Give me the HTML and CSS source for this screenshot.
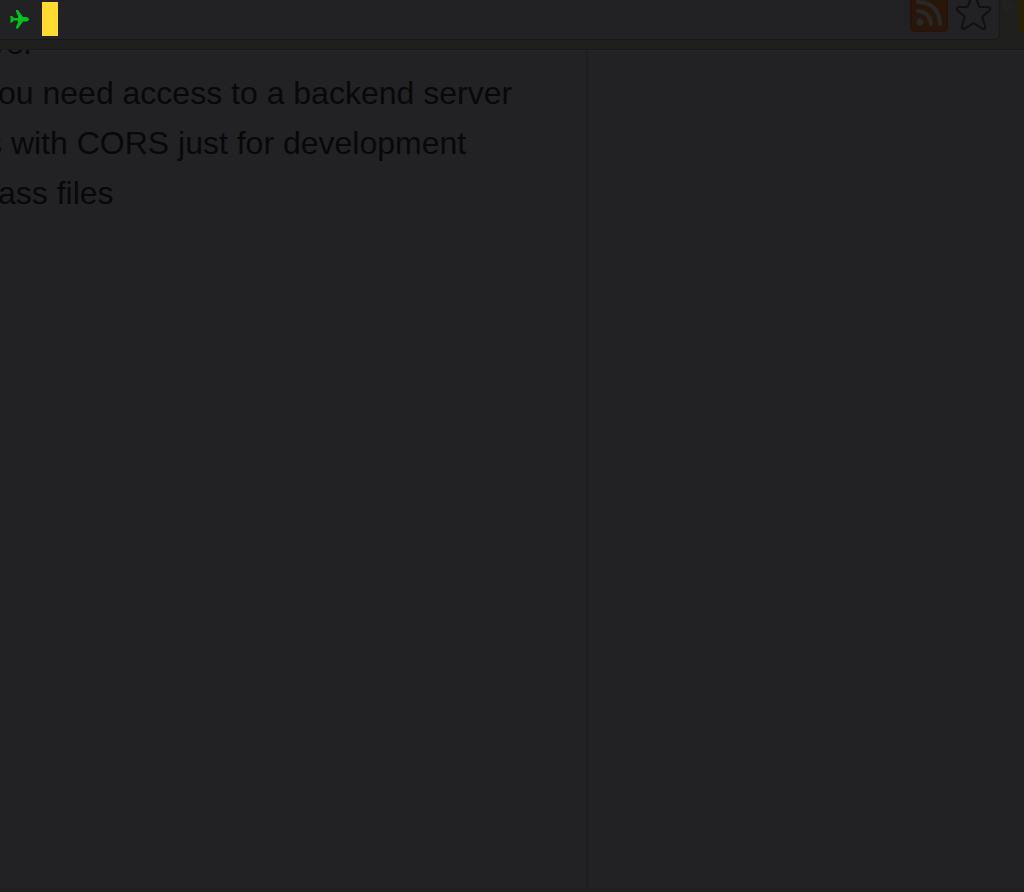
FILE: index.html
```html
<!DOCTYPE html>
<html lang="en">
<head>
<meta charset="utf-8">
<title>Terminal</title>
<link rel="stylesheet" href="styles.css">
</head>
<body>
<header class="toolbar">
  <div class="address">
    <div class="prompt">
      <svg class="plane" width="20" height="20" viewBox="0 0 20 20" aria-hidden="true"><path d="M0 6h2l2 2h4V6L7 4 6 1V0h2l5 7h4q2 1 2 2.500q0 1.500-2 2h-4l-5 7H6v-1l1-3 1-2v-2H4l-2 2H0l1-3H0V9h1z"/></svg>
      <span class="cursor"></span>
    </div>
    <div class="actions">
      <button class="icon-button" type="button" aria-label="RSS feed">
        <svg width="38" height="32" viewBox="0 0 38 32"><path d="M0 0h38v27q0 5-5 5H5q-5 0-5-5z" fill="#26140a"/><path d="M2 0h34v27q0 3-3 3H5q-3 0-3-3z" fill="#29160b"/><g fill="none" stroke="#2a2827" stroke-width="4" stroke-linecap="round"><path d="M8 11q12 1 13 13"/><path d="M8 2q21 1 22 22"/></g><circle cx="10" cy="22" r="3.500" fill="#2a2827"/></svg>
      </button>
      <button class="icon-button" type="button" aria-label="Bookmark">
        <svg width="36" height="32" viewBox="0 0 36 32"><path d="M15-2Q17.500-6 20-2L23 6q.5 1 2 1h7q4 1 1 4l-6 5q-1 1-.5 2l2.500 8q1 4-3 2.500l-7-4.500q-1.500-1-3 0l-7 4.500Q5 30 6 26l2.500-8q.5-1-.5-2l-6-5q-3-3 1-4h7q1.500 0 2-1z" fill="none" stroke="#101011" stroke-width="2" stroke-linejoin="round"/></svg>
      </button>
    </div>
  </div>
  <div class="extensions">
    <svg width="24" height="32" viewBox="0 0 24 32" aria-hidden="true"><path d="M3 0h5v4h6v4H8v4H4V8H1V4h2z" fill="#212120"/><path d="M18 0h6v32h-3q-3-3-3-7z" fill="#272006"/></svg>
  </div>
</header>
<main class="page">
  <section class="content">
    <ul class="notes">
      <li class="lead">ver</li>
      <li>ou need access to a backend server</li>
      <li class="hang">s with CORS just for development</li>
      <li>ass files</li>
    </ul>
  </section>
  <aside class="side"></aside>
</main>
</body>
</html>
```
FILE: styles.css
```css
* { box-sizing: border-box; }
body {
  margin: 0;
  min-height: 100vh;
  display: flex;
  flex-direction: column;
  overflow: hidden;
  background: #222224;
  font-family: "Liberation Sans", Arial, sans-serif;
}
.toolbar {
  display: flex;
  height: 50px;
  background: #1f1f1d;
  border-bottom: 1px solid #19191a;
}
.address {
  flex: 1;
  display: flex;
  justify-content: space-between;
  height: 40px;
  padding: 0 7px 0 10px;
  background: #222224;
  border-right: 1px solid #191919;
  border-bottom: 1px solid #191919;
  border-bottom-right-radius: 5px;
}
.prompt {
  display: flex;
  gap: 12px;
  padding-top: 2px;
}
.plane { margin-top: 8px; fill: #00c21d; }
.cursor { width: 16px; height: 34px; background: #ffdb32; }
.actions { display: flex; gap: 8px; }
.icon-button {
  display: block;
  height: 32px;
  padding: 0;
  border: 0;
  background: none;
}
.icon-button svg, .extensions svg { display: block; }
.page {
  flex: 1;
  display: grid;
  grid-template-columns: 588fr 436fr;
  background: linear-gradient(#262629 1px, transparent 1px);
  border-bottom: 4px solid #202022;
}
.content {
  overflow: hidden;
  border-right: 2px solid #1e1e1d;
}
.notes {
  margin: -32px 0 0;
  padding: 0;
  list-style: none;
  color: #080808;
  font-size: 32px;
  line-height: 50px;
  white-space: nowrap;
}
.notes li { margin-left: -2px; }
.notes .hang { margin-left: -14px; }
.notes .lead { margin-left: -10px; }
```
